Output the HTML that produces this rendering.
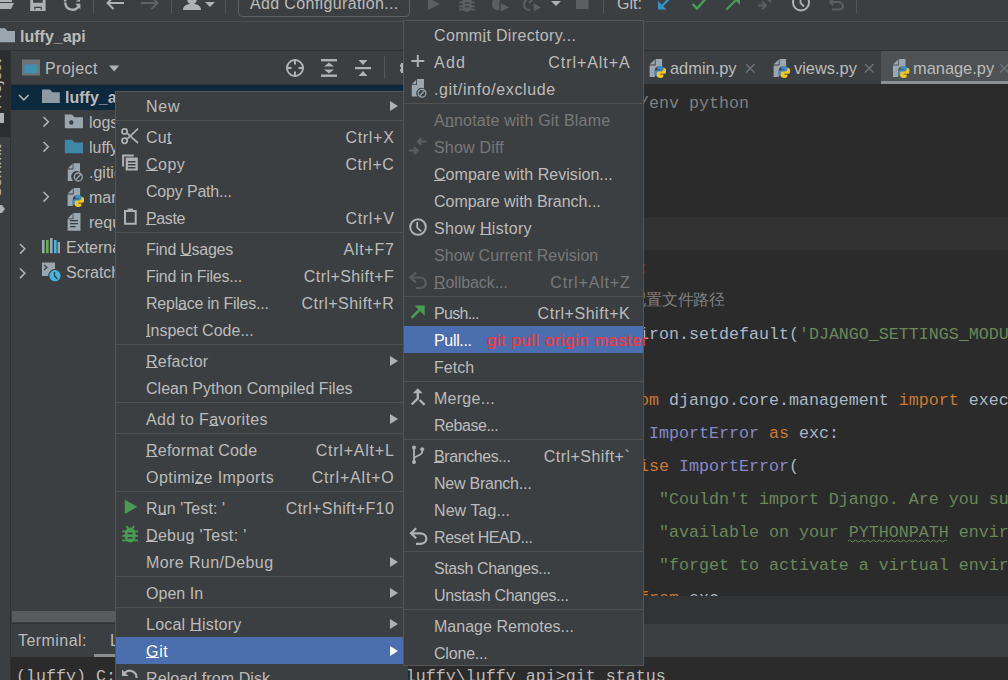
<!DOCTYPE html>
<html><head><meta charset="utf-8">
<style>
*{margin:0;padding:0;box-sizing:border-box}
html,body{width:1008px;height:680px;overflow:hidden;background:#3c3f41;font-family:"Liberation Sans",sans-serif;color:#bbbbbb;font-size:16px}
.a{position:absolute}
.t{position:absolute;white-space:pre;line-height:27px}
svg{position:absolute;overflow:visible}
/* menus */
.menu{position:absolute;background:#3c3f41;border:1px solid #555555}
.mi{position:absolute;left:0;right:0;height:27px;line-height:27px;white-space:pre}
.mi .l{position:absolute;left:30px;top:1px}
.mi .s{position:absolute;right:14px;top:1px}
.mi.dis{color:#787878}
.arr{position:absolute;right:9px;top:8.5px;width:0;height:0;border-left:8px solid #afb1b3;border-top:5px solid transparent;border-bottom:5px solid transparent}
.sel .arr{border-left-color:#fff}
.sep{position:absolute;left:0;right:0;height:1px;background:#515151}
.sel{background:#4b6eaf;color:#ffffff}
u{text-decoration:underline;text-underline-offset:0px;text-decoration-thickness:1px}
.code{position:absolute;font-family:"Liberation Mono",monospace;font-size:16.67px;white-space:pre;line-height:33px;color:#a9b7c6}
.kw{color:#cc7832}.str{color:#6a8759}.cls{color:#8888c6}.cm{color:#808080}
</style></head><body>

<!-- toolbar -->
<svg style="left:0;top:0" width="1008" height="21" viewBox="0 0 1008 21">
<g fill="#afb1b3">
<path d="M0 -4 H12 V2 H0 Z"/>
<path d="M0 3 H14 L11 9 H0 Z"/>
</g>
<g fill="none" stroke="#afb1b3" stroke-width="2">
</g>
<path d="M30.2 -5 H45.6 V11 H30.2 Z M33.1 -5 V2.7 H42.7 V-5 Z M34.3 6.8 V9.8 H35.5 V8 H40.6 V9.8 H41.8 V6.8 Z" fill="#afb1b3" fill-rule="evenodd"/>
<path d="M65.3 2.5 A7.2 7.2 0 0 0 78.6 6.3" fill="none" stroke="#afb1b3" stroke-width="2.4"/>
<path d="M75.5 3.8 H80.4 V9.6 Z" fill="#afb1b3"/>
<path d="M65 1.5 A7.2 7.2 0 0 1 67 -3" fill="none" stroke="#afb1b3" stroke-width="2.4"/>
<path d="M75.5 1.5 H80 V-1 Z" fill="#afb1b3"/>
<rect x="93" y="0" width="1" height="13" fill="#515658"/>
<g fill="none" stroke="#afb1b3" stroke-width="2"><path d="M107.5 3 H124 M113.5 -3 L107.5 3 L113.5 9"/></g>
<g fill="none" stroke="#606365" stroke-width="2"><path d="M141 3 H157.5 M151.5 -3 L157.5 3 L151.5 9"/></g>
<rect x="171" y="0" width="1" height="13" fill="#515658"/>
<path d="M183 10 C183 6 186 4.5 190 4 C186 2 186 -4 192 -4 C198 -4 198 2 194 4 C198 4.5 201 6 201 10 Z" fill="#afb1b3"/>
<path d="M205 2 H215 L210 7 Z" fill="#afb1b3"/>
<rect x="225" y="0" width="1" height="13" fill="#515658"/>
<rect x="238.5" y="-5" width="171" height="21.5" rx="3.5" fill="none" stroke="#5e6060" stroke-width="1"/>
<path d="M428 -2 L440 4 L428 10 Z" fill="#5c5f61"/>
<g fill="#5c5f61">
<path d="M462.5 -3 H471.5 V7 C471.5 10 469.5 11.8 467 11.8 C464.5 11.8 462.5 10 462.5 7 Z"/>
<rect x="459" y="1.4" width="15.6" height="1.9"/><rect x="459" y="5.3" width="15.6" height="1.9"/><rect x="459" y="8.6" width="15.6" height="1.8"/>
</g>
<g fill="#3c3f41"><rect x="465" y="2.4" width="4.5" height="1.3"/><rect x="465" y="6.1" width="4.5" height="1.3"/></g>
<path d="M498 -4 C494 -3 492 0.5 492 4 C492 7.5 494.5 10.3 498 10.3 L500 10.3 L500 -4 Z" fill="#5c5f61"/>
<path d="M500 2 L511 7.3 L500 12.6 Z" fill="#5c5f61" stroke="#3c3f41" stroke-width="1.4"/>
<path d="M532 -2 C526.5 -2 524 1.5 524 4.5 C524 8 526.5 10 530 10" fill="none" stroke="#5c5f61" stroke-width="2"/>
<path d="M529 3 L533 -1" stroke="#5c5f61" stroke-width="1.8"/>
<path d="M533 2 L542.5 7.3 L533 12.6 Z" fill="#5c5f61" stroke="#3c3f41" stroke-width="1.4"/>
<path d="M551 1 H561 L556 6 Z" fill="#afb1b3"/>
<rect x="576" y="-3" width="12.5" height="12" fill="#5c5f61"/>
<rect x="603" y="0" width="1" height="13" fill="#515658"/>
<g fill="none" stroke="#3592c4" stroke-width="2.2"><path d="M670 -2 L660 8"/></g><path d="M658 1 V9.5 H666.5 Z" fill="#3592c4"/>
<path d="M692.5 4 L697 8.5 L705.5 -1" fill="none" stroke="#499c54" stroke-width="2.4"/>
<g fill="none" stroke="#499c54" stroke-width="2.2"><path d="M726.5 9.5 L737 -1"/></g><path d="M740 -3 V5 L732 -3 Z" fill="#499c54"/>
<g fill="none" stroke="#5c5f61" stroke-width="2"><path d="M758 5.5 H766 M762 1.5 L766 5.5 L762 9.5"/><path d="M775 -2 H767 M771 -6 L767 -2 L771 2"/></g>
<circle cx="801" cy="2.5" r="8" fill="none" stroke="#afb1b3" stroke-width="2"/><path d="M800.5 -2 V3 L804 6.5" fill="none" stroke="#afb1b3" stroke-width="1.8"/>
<path d="M833 -1 L830 2 L833 5 M830 2 H838 C841 2 843 4 843 6 C843 8.5 841 9.5 838 9.5 H832" fill="none" stroke="#5c5f61" stroke-width="2"/>
<rect x="856" y="0" width="1" height="13" fill="#515658"/>
</svg>
<div class="t" style="left:250px;top:-10px;line-height:27px;letter-spacing:0.36px">Add Configuration...</div>
<div class="t" style="left:617px;top:-10px;line-height:27px">Git:</div>
<div class="a" style="left:0;top:21px;width:1008px;height:1px;background:#4e4e4e"></div>

<!-- nav bar -->
<div class="a" style="left:0;top:50px;width:1008px;height:1px;background:#2f3133"></div>
<div class="t" style="left:20px;top:23px;line-height:28px;font-weight:bold">luffy_api</div>

<!-- left stripe -->


<!-- project header -->
<!-- selected row -->
<div class="a" style="left:11px;top:84px;width:400px;height:1px;background:#323232"></div>
<div class="a" style="left:11px;top:85px;width:400px;height:25px;background:#0d293e"></div>
<svg style="left:0;top:0" width="420" height="300" viewBox="0 0 420 300">
<defs>
<g id="pyfile">
<path d="M0 5.6 L5.2 0.4 V5.6 Z" fill="#9aa7b0"/>
<path d="M6 0 H12.5 V7.6 H9.5 C7 7.6 5.2 9.2 5.2 11.6 V18 H0 V6.4 H6 Z" fill="#9aa7b0"/>
<path d="M10.6 7.1 C8 7.1 7.6 8.2 7.6 9.2 V10.6 H10.8 V11.2 H6.6 C5.4 11.2 4.8 12.3 4.8 14.1 C4.8 15.9 5.6 16.9 6.6 16.9 H7.6 V15.4 C7.6 14.3 8.5 13.5 9.6 13.5 H12.6 C13.5 13.5 14.2 12.8 14.2 11.9 V9.2 C14.2 8.1 13.2 7.1 10.6 7.1 Z" fill="#3d8cc8"/>
<path d="M10.8 18.9 C13.4 18.9 13.8 17.8 13.8 16.8 V15.4 H10.6 V14.8 H14.8 C16 14.8 16.5 13.7 16.5 11.9 C16.5 10.1 15.8 9.1 14.8 9.1 H13.8 V10.6 C13.8 11.7 12.9 12.5 11.8 12.5 H8.8 C7.9 12.5 7.2 13.2 7.2 14.1 V16.8 C7.2 17.9 8.2 18.9 10.8 18.9 Z" fill="#f5c518"/>
</g>
</defs>
<!-- nav folder -->
<path d="M-1 28.2 H5 L7.5 31 H15 V42.2 H-1 Z" fill="#9aa7b0"/>
<!-- stripe -->
<rect x="0" y="51" width="10" height="86" fill="#2b2d2e"/>
<rect x="10" y="51" width="1" height="629" fill="#2f3133"/>
<text transform="translate(0.6,109) rotate(-90)" font-family="Liberation Sans" font-size="16" fill="#bbbbbb">Project</text>
<rect x="0" y="113" width="4" height="10" fill="#afb1b3"/>
<text transform="translate(0.6,198) rotate(-90)" font-family="Liberation Sans" font-size="15.5" fill="#bbbbbb">Commit</text>
<path d="M0 205 H2 L5 209 L2 213 H0 Z" fill="#afb1b3"/>
<!-- project header icon -->
<rect x="22" y="59.5" width="18" height="16" fill="#6e7375"/>
<rect x="24.4" y="64.3" width="13.1" height="9" fill="#3e8fb0"/>
<path d="M109 65.4 H119.3 L114.15 71.4 Z" fill="#afb1b3"/>
<!-- header toolbar icons -->
<g fill="none" stroke="#afb1b3" stroke-width="2">
<circle cx="295" cy="68" r="8"/>
<path d="M295 59 V64.5 M295 71.5 V77 M286 68 H291.5 M298.5 68 H304"/>
<path d="M321.5 60 H337 M321.5 76 H337 M321.5 68 H337" stroke-width="0"/>
</g>
<g fill="#afb1b3">
<rect x="321" y="59" width="16" height="2.4"/><rect x="321" y="74.5" width="16" height="2.4"/>
<path d="M324 66.5 L329 62.5 L334 66.5 Z M324 69.5 L329 73.5 L334 69.5 Z"/>
<rect x="355" y="67" width="16" height="2.2"/>
<path d="M358.5 60 H367.5 L363 65 Z M358.5 76 H367.5 L363 71 Z"/>
<rect x="384" y="56" width="1" height="23" fill="#515658"/>
<path d="M403.5 63 H401 V64.5 H400 V66.6 A1.6 1.6 0 0 1 400 69.6 V71.6 H401 V73 H403.5 Z" fill="#afb1b3"/>
</g>
<!-- tree -->
<path d="M19 95 L23.8 99.8 L28.6 95" fill="none" stroke="#afb1b3" stroke-width="1.6"/>
<path d="M42 89.4 H50 L52.5 92.2 H59.8 V103 H42 Z" fill="#8e9ba4"/>
<g fill="none" stroke="#afb1b3" stroke-width="1.6">
<path d="M43.5 117 L48.3 121.8 L43.5 126.6"/>
<path d="M43.5 142 L48.3 146.8 L43.5 151.6"/>
<path d="M43.5 192 L48.3 196.8 L43.5 201.6"/>
<path d="M20 244 L24.8 248.8 L20 253.6"/>
<path d="M20 268.5 L24.8 273.3 L20 278.1"/>
</g>
<path d="M64.8 114.5 H72 L74.5 117.3 H83 V128.2 H64.8 Z" fill="#9aa7b0"/>
<circle cx="71.3" cy="122.5" r="2.2" fill="#3c3f41"/>
<path d="M64.8 139.8 H72 L74.5 142.6 H83 V153.3 H64.8 Z" fill="#3f87a6"/>
<!-- gitignore -->
<path d="M67.8 168.6 L72.6 163.8 V168.6 Z" fill="#9aa7b0"/><path d="M73.4 163.3 H80 V172 A5.2 5.2 0 0 0 73.5 181 H67.8 V169.4 H73.4 Z" fill="#9aa7b0"/>
<circle cx="78.3" cy="177" r="4" fill="none" stroke="#9aa7b0" stroke-width="1.3"/>
<path d="M75.6 179.7 L81 174.3" stroke="#9aa7b0" stroke-width="1.3"/>
<!-- manage.py -->
<use href="#pyfile" x="67.6" y="188"/>
<!-- requirements -->
<path d="M67.6 218.4 L72.6 213.4 V218.4 Z" fill="#9aa7b0"/><path d="M73.4 213 H80.5 V230.8 H67.6 V219.2 H73.4 Z" fill="#9aa7b0"/>
<g fill="#3c3f41"><rect x="70" y="220" width="8" height="1.3"/><rect x="70" y="223" width="8" height="1.3"/><rect x="70" y="226" width="5.5" height="1.3"/></g>
<!-- external libs -->
<g><rect x="42" y="240" width="2.6" height="13.2" fill="#9aa7b0"/><rect x="46" y="240" width="2.6" height="13.2" fill="#62b543"/><rect x="50" y="238" width="2.6" height="15.2" fill="#9aa7b0"/><rect x="54" y="240" width="2.6" height="13.2" fill="#40b6e0"/><rect x="57.6" y="242" width="2.4" height="11.2" fill="#9aa7b0"/></g>
<!-- scratches -->
<path d="M42 262.5 H55 V270 A6.5 6.5 0 0 0 49 276 H42 Z" fill="#9aa7b0"/>
<path d="M44 265 L47 267.5 L44 270" fill="none" stroke="#3c3f41" stroke-width="1.2"/>
<circle cx="55" cy="275.7" r="6.2" fill="#40b6e0" stroke="#3c3f41" stroke-width="1.2"/>
<path d="M54.5 272 V276 L57.5 279" fill="none" stroke="#3c3f41" stroke-width="1.3"/>
<!-- tab icons -->

</svg>
<div class="t" style="left:45px;top:55px;line-height:27px;letter-spacing:0.45px">Project</div>

<div class="t" style="left:65px;top:85px;line-height:25px;font-weight:bold">luffy_api</div>
<div class="t" style="left:89px;top:110px;line-height:25px">logs</div>
<div class="t" style="left:89px;top:135px;line-height:25px">luffy_api</div>
<div class="t" style="left:89px;top:160px;line-height:25px">.gitignore</div>
<div class="t" style="left:89px;top:185px;line-height:25px">manage.py</div>
<div class="t" style="left:89px;top:210px;line-height:25px">requirements.txt</div>
<div class="t" style="left:66px;top:235px;line-height:25px">External Libraries</div>
<div class="t" style="left:66px;top:260px;line-height:25px">Scratches and Consoles</div>

<!-- horizontal scrollbar of project -->
<div class="a" style="left:12px;top:611px;width:400px;height:11px;background:#5a5b5c"></div>

<!-- editor tabs -->
<div class="a" style="left:643px;top:51px;width:365px;height:33px;background:#3c3f41"></div>
<div class="a" style="left:881px;top:51px;width:127px;height:33px;background:#4e5254"></div>
<div class="a" style="left:881px;top:81px;width:127px;height:3px;background:#8c9093"></div>
<svg style="left:0;top:0" width="1008" height="90" viewBox="0 0 1008 90"><use href="#pyfile" x="649.6" y="59"/>
<use href="#pyfile" x="773.6" y="59"/>
<use href="#pyfile" x="893" y="59"/>
<g stroke="#6f7375" stroke-width="1.4"><path d="M746 64 L754.5 72.5 M754.5 64 L746 72.5"/><path d="M865 64 L873.5 72.5 M873.5 64 L865 72.5"/><path d="M1000 64 L1008.5 72.5 M1008.5 64 L1000 72.5"/></g></svg>
<div class="t" style="left:670px;top:55px;font-size:16.4px">admin.py</div>
<div class="t" style="left:794px;top:55px;font-size:16.4px">views.py</div>
<div class="t" style="left:913px;top:55px;font-size:16.4px">manage.py</div>

<!-- editor -->
<div class="a" style="left:412px;top:84px;width:596px;height:512px;background:#2b2b2b"></div>
<div class="a" style="left:412px;top:217px;width:596px;height:33px;background:#323232"></div>

<div class="a" style="left:412px;top:84px;width:596px;height:512px;overflow:hidden"><div class="code" style="left:127px;top:3px"><span class="cm">#!/usr/bin/env python</span>
import os
import sys


<span class="kw">def</span> <span style="color:#ffc66d">main</span>()<span style="color:#563a32">:</span>
    <span class="cm">#</span>
    os.environ.setdefault(<span class="str">'DJANGO_SETTINGS_MODULE'</span>, <span class="str">'luffy_api.settings.dev'</span>)
    <span class="kw">try</span>:
        <span class="kw">from</span> django.core.management <span class="kw">import</span> execute_from_command_line
    <span class="kw">except</span> <span class="cls">ImportError</span> <span class="kw">as</span> exc:
        <span class="kw">raise</span> <span class="cls">ImportError</span>(
            <span class="str">"Couldn't import Django. Are you sure it's installed and "</span>
            <span class="str">"available on your PYTHONPATH environment variable? Did you "</span>
            <span class="str">"forget to activate a virtual environment?"</span>
        ) <span class="kw">from</span> exc
    execute_from_command_line(sys.argv)
</div>
<div class="a" style="left:187px;top:199px;font-size:16px;letter-spacing:-0.3px;color:#808080;line-height:33px;white-space:pre;font-family:'Liberation Sans',sans-serif">设置配置文件路径</div>
<svg style="left:0;top:0" width="596" height="512"><path d="M436 457 q1.5 -2 3 0 t3 0 t3 0 t3 0 t3 0 t3 0 t3 0 t3 0 t3 0 t3 0 t3 0 t3 0 t3 0 t3 0 t3 0 t3 0 t3 0 t3 0 t3 0 t3 0 t3 0 t3 0 t3 0 t3 0 t3 0 t3 0 t3 0 t3 0 t3 0 t3 0 t3 0 t3 0 t3 0" fill="none" stroke="#6a8759" stroke-width="1"/></svg></div>
<!-- breadcrumbs -->
<div class="a" style="left:412px;top:596px;width:596px;height:27px;background:#313335"></div>

<!-- terminal -->
<div class="a" style="left:11px;top:623px;width:997px;height:34px;background:#3c3f41;border-top:1px solid #2f3133"></div>
<div class="t" style="left:18px;top:627px;line-height:27px;letter-spacing:0.45px">Terminal:</div>
<div class="t" style="left:110px;top:627px;line-height:27px">Local</div>
<div class="a" style="left:94px;top:654px;width:60px;height:3px;background:#8c9093"></div>
<div class="a" style="left:11px;top:657px;width:997px;height:23px;background:#2b2b2b"></div>
<div class="code" style="left:16px;top:665px;line-height:24px;color:#bbbbbb">(luffy) C:\Users\Administrator\Desktop\luffy\luffy_api&gt;git status</div>

<!-- left menu -->
<div class="menu" style="left:115px;top:91px;width:293px;height:600px;border-right-color:#3c3f41">
<div class="mi" style="top:0px"><span class="l" style="letter-spacing:0.79px">New</span><i class="arr"></i></div>
<div class="sep" style="top:28px"></div>
<div class="mi" style="top:31px"><span class="l" style="letter-spacing:0.25px">Cu<u>t</u></span><span class="s" style="letter-spacing:0.68px;right:12.52px">Ctrl+X</span><!--icon:cut--></div>
<div class="mi" style="top:58px"><span class="l" style="letter-spacing:0.48px"><u>C</u>opy</span><span class="s" style="letter-spacing:0.5px;right:12.7px">Ctrl+C</span><!--icon:copy--></div>
<div class="mi" style="top:85px"><span class="l" style="letter-spacing:-0.18px">Copy Path...</span></div>
<div class="mi" style="top:112px"><span class="l" style="letter-spacing:-0.38px"><u>P</u>aste</span><span class="s" style="letter-spacing:0.68px;right:12.52px">Ctrl+V</span><!--icon:paste--></div>
<div class="sep" style="top:140px"></div>
<div class="mi" style="top:143px"><span class="l" style="letter-spacing:-0.27px">Find <u>U</u>sages</span><span class="s" style="letter-spacing:0.72px;right:12.48px">Alt+F7</span></div>
<div class="mi" style="top:170px"><span class="l" style="letter-spacing:-0.23px">Find in Files...</span><span class="s" style="letter-spacing:0.42px;right:12.78px">Ctrl+Shift+F</span></div>
<div class="mi" style="top:197px"><span class="l" style="letter-spacing:-0.24px">Repl<u>a</u>ce in Files...</span><span class="s" style="letter-spacing:0.46px;right:12.74px">Ctrl+Shift+R</span></div>
<div class="mi" style="top:224px"><span class="l" style="letter-spacing:0.01px"><u>I</u>nspect Code...</span></div>
<div class="sep" style="top:252px"></div>
<div class="mi" style="top:255px"><span class="l" style="letter-spacing:0.23px"><u>R</u>efactor</span><i class="arr"></i></div>
<div class="mi" style="top:282px"><span class="l" style="letter-spacing:0.01px">Clean Python Compiled Files</span></div>
<div class="sep" style="top:310px"></div>
<div class="mi" style="top:313px"><span class="l" style="letter-spacing:0.33px">Add to F<u>a</u>vorites</span><i class="arr"></i></div>
<div class="sep" style="top:341px"></div>
<div class="mi" style="top:344px"><span class="l" style="letter-spacing:0.22px"><u>R</u>eformat Code</span><span class="s" style="letter-spacing:0.77px;right:12.43px">Ctrl+Alt+L</span></div>
<div class="mi" style="top:371px"><span class="l" style="letter-spacing:0.45px">Optimi<u>z</u>e Imports</span><span class="s" style="letter-spacing:0.82px;right:12.38px">Ctrl+Alt+O</span></div>
<div class="sep" style="top:399px"></div>
<div class="mi" style="top:402px"><span class="l" style="letter-spacing:0.08px">R<u>u</u>n 'Test: '</span><span class="s" style="letter-spacing:0.38px;right:12.82px">Ctrl+Shift+F10</span><!--icon:run--></div>
<div class="mi" style="top:429px"><span class="l" style="letter-spacing:0.33px"><u>D</u>ebug 'Test: '</span><!--icon:debug--></div>
<div class="mi" style="top:456px"><span class="l" style="letter-spacing:0.4px">More Run/Debug</span><i class="arr"></i></div>
<div class="sep" style="top:484px"></div>
<div class="mi" style="top:487px"><span class="l" style="letter-spacing:0.03px">Open In</span><i class="arr"></i></div>
<div class="sep" style="top:515px"></div>
<div class="mi" style="top:518px"><span class="l" style="letter-spacing:0.23px">Local <u>H</u>istory</span><i class="arr"></i></div>
<div class="mi sel" style="top:545px"><span class="l" style="letter-spacing:0.67px"><u>G</u>it</span><i class="arr"></i></div>
<div class="mi" style="top:572px"><span class="l" style="letter-spacing:0.09px">Reload from Disk</span><!--icon:reload--></div>
<svg style="left:-116px;top:-92px" width="1008" height="680" viewBox="0 0 1008 680">
<g fill="none" stroke="#afb1b3" stroke-width="1.7">
<circle cx="124.6" cy="131.4" r="2.6"/><circle cx="124.6" cy="140.8" r="2.6"/>
<path d="M126.8 132.8 L138 143 M126.8 139.4 L138 128.6"/>
</g>
<g fill="#afb1b3">
<path d="M122.1 154.4 H133.8 V156.4 H124.1 V166.5 H122.1 Z"/>
<path d="M125.7 157.6 H137.8 V170.5 H125.7 Z M128 161 V162.6 H135.5 V161 Z M128 164 V165.6 H135.5 V164 Z M128 167 V168.4 H135.5 V167 Z" fill-rule="evenodd"/>
</g>
<path d="M128 211 H125 V223.7 H135.7 V211 H132.6" fill="none" stroke="#afb1b3" stroke-width="2"/>
<rect x="127.6" y="208.6" width="5.4" height="3.4" fill="#afb1b3"/>
<path d="M124.8 499.7 L137.3 506.85 L124.8 514 Z" fill="#499c54"/>
<g fill="#499c54">
<ellipse cx="130.2" cy="535" rx="5.6" ry="7.6"/>
<path d="M126.5 526 L128.5 529 M134 526 L132 529" stroke="#499c54" stroke-width="1.8"/>
<rect x="122.3" y="530.5" width="15.7" height="1.8"/><rect x="122.3" y="535" width="15.7" height="1.8"/><rect x="122.3" y="539.5" width="15.7" height="1.8"/>
</g>
<g fill="#3c3f41"><rect x="127.8" y="532.6" width="4.8" height="1.6"/><rect x="127.8" y="537" width="4.8" height="1.6"/></g>
<path d="M136.6 678 A7 7 0 0 0 124.5 673" fill="none" stroke="#afb1b3" stroke-width="2.2"/>
<path d="M122 669.5 L122 676 L128.5 676 Z" fill="#afb1b3"/>
</svg>
</div>

<!-- git submenu -->
<div class="menu" style="left:403px;top:20px;width:241px;height:646px;overflow:visible">
<div class="mi" style="top:0px"><span class="l" style="letter-spacing:0.34px">Comm<u>i</u>t Directory...</span></div>
<div class="mi" style="top:27px"><span class="l" style="letter-spacing:1.22px">Add</span><span class="s" style="letter-spacing:0.95px;right:12.35px">Ctrl+Alt+A</span></div>
<div class="mi" style="top:54px"><span class="l" style="letter-spacing:0.63px">.git/info/exclude</span></div>
<div class="sep" style="top:82px"></div>
<div class="mi dis" style="top:85px"><span class="l" style="letter-spacing:0.2px">A<u>n</u>notate with Git Blame</span></div>
<div class="mi dis" style="top:112px"><span class="l" style="letter-spacing:0.2px">Show Diff</span></div>
<div class="mi" style="top:139px"><span class="l" style="letter-spacing:0.04px"><u>C</u>ompare with Revision...</span></div>
<div class="mi" style="top:166px"><span class="l" style="letter-spacing:-0.02px">Compare with Branch...</span></div>
<div class="mi" style="top:193px"><span class="l" style="letter-spacing:0.3px">Show <u>H</u>istory</span></div>
<div class="mi dis" style="top:220px"><span class="l" style="letter-spacing:0.03px">Show Current Revision</span></div>
<div class="mi dis" style="top:247px"><span class="l" style="letter-spacing:-0.09px"><u>R</u>ollback...</span><span class="s" style="letter-spacing:0.82px;right:12.48px">Ctrl+Alt+Z</span></div>
<div class="sep" style="top:275px"></div>
<div class="mi" style="top:278px"><span class="l" style="letter-spacing:-0.71px">Push...</span><span class="s" style="letter-spacing:0.53px;right:12.77px">Ctrl+Shift+K</span></div>
<div class="mi sel" style="top:305px"><span class="l" style="letter-spacing:-0.33px">Pull...</span></div>
<div class="t" style="left:83px;top:306px;color:#fa3434;font-size:16px;letter-spacing:0.82px;line-height:27px;z-index:2;-webkit-text-stroke:0.2px #fa3434">git pull origin master</div>
<div class="mi" style="top:332px"><span class="l" style="letter-spacing:0.01px">Fetch</span></div>
<div class="sep" style="top:360px"></div>
<div class="mi" style="top:363px"><span class="l" style="letter-spacing:0.27px">Merge...</span></div>
<div class="mi" style="top:390px"><span class="l" style="letter-spacing:-0.46px">Rebase...</span></div>
<div class="sep" style="top:418px"></div>
<div class="mi" style="top:421px"><span class="l" style="letter-spacing:-0.41px"><u>B</u>ranches...</span><span class="s" style="letter-spacing:0.46px;right:12.84px">Ctrl+Shift+`</span></div>
<div class="mi" style="top:448px"><span class="l" style="letter-spacing:-0.24px">New Branch...</span></div>
<div class="mi" style="top:475px"><span class="l" style="letter-spacing:0.08px">New Tag...</span></div>
<div class="mi" style="top:502px"><span class="l" style="letter-spacing:-0.42px">Reset HEAD...</span></div>
<div class="sep" style="top:530px"></div>
<div class="mi" style="top:533px"><span class="l" style="letter-spacing:-0.39px">Stash Changes...</span></div>
<div class="mi" style="top:560px"><span class="l" style="letter-spacing:-0.33px">Unstash Changes...</span></div>
<div class="sep" style="top:588px"></div>
<div class="mi" style="top:591px"><span class="l" style="letter-spacing:0.02px">Manage Remotes...</span></div>
<div class="mi" style="top:618px"><span class="l" style="letter-spacing:-0.19px">Clone...</span></div>
<svg style="left:-404px;top:-21px" width="1008" height="680" viewBox="0 0 1008 680">
<path d="M417.8 55 V67 M411.3 61 H424.3" stroke="#afb1b3" stroke-width="2"/>
<path d="M411.8 84.2 L416.2 79.8 V84.2 Z" fill="#9aa7b0"/><path d="M417 79 H424 V88.6 A5.2 5.2 0 0 0 417.6 96.6 H411.8 V85 H417 Z" fill="#9aa7b0"/>
<circle cx="422" cy="93.3" r="3.9" fill="none" stroke="#9aa7b0" stroke-width="1.3"/>
<path d="M419.4 96 L424.6 90.6" stroke="#9aa7b0" stroke-width="1.3"/>
<g fill="none" stroke="#5b5e60" stroke-width="2.2"><path d="M426.5 141.5 H418 M421.5 138 L418 141.5 L421.5 145"/><path d="M409 150.5 H417.5 M414 147 L417.5 150.5 L414 154"/></g>
<circle cx="418" cy="227" r="7.8" fill="none" stroke="#afb1b3" stroke-width="2"/>
<path d="M417.2 222 V227.6 L421.2 231.4" fill="none" stroke="#afb1b3" stroke-width="1.8"/>
<path d="M412 277.5 H420 C423.5 277.5 425.7 280 425.7 283 C425.7 286 423.5 288 420 288 H416" fill="none" stroke="#5b5e60" stroke-width="2.2"/>
<path d="M416 272.5 L410.5 277.5 L416 282.5" fill="none" stroke="#5b5e60" stroke-width="2.2"/>
<path d="M411.5 317.8 L421 308.3" stroke="#499c54" stroke-width="2.6"/>
<path d="M414.6 305.6 H424.7 V315.7 Z" fill="#499c54"/>
<path d="M412.8 393.3 L417.8 388.3 L422.7 393.3 Z" fill="#afb1b3"/>
<path d="M417.8 392 V398.5 L411.6 404.5 M419.6 400 L424.6 404.8" fill="none" stroke="#afb1b3" stroke-width="2.4"/>
<g fill="#afb1b3"><circle cx="414" cy="447.6" r="2"/><circle cx="414" cy="462" r="2"/><circle cx="422.2" cy="449.2" r="2"/></g>
<path d="M414 447.6 V462 M422.2 449.2 V452 C422.2 455.5 414 456 414 459" fill="none" stroke="#afb1b3" stroke-width="1.8"/>
<path d="M412 533.3 H420 C423.8 533.3 426.4 535.8 426.4 538.8 C426.4 541.8 423.8 543.8 420 543.8 H416" fill="none" stroke="#afb1b3" stroke-width="2.2"/>
<path d="M416.2 528.3 L411 533.3 L416.2 538.3" fill="none" stroke="#afb1b3" stroke-width="2.2"/>
</svg>
</div>

</body></html>
